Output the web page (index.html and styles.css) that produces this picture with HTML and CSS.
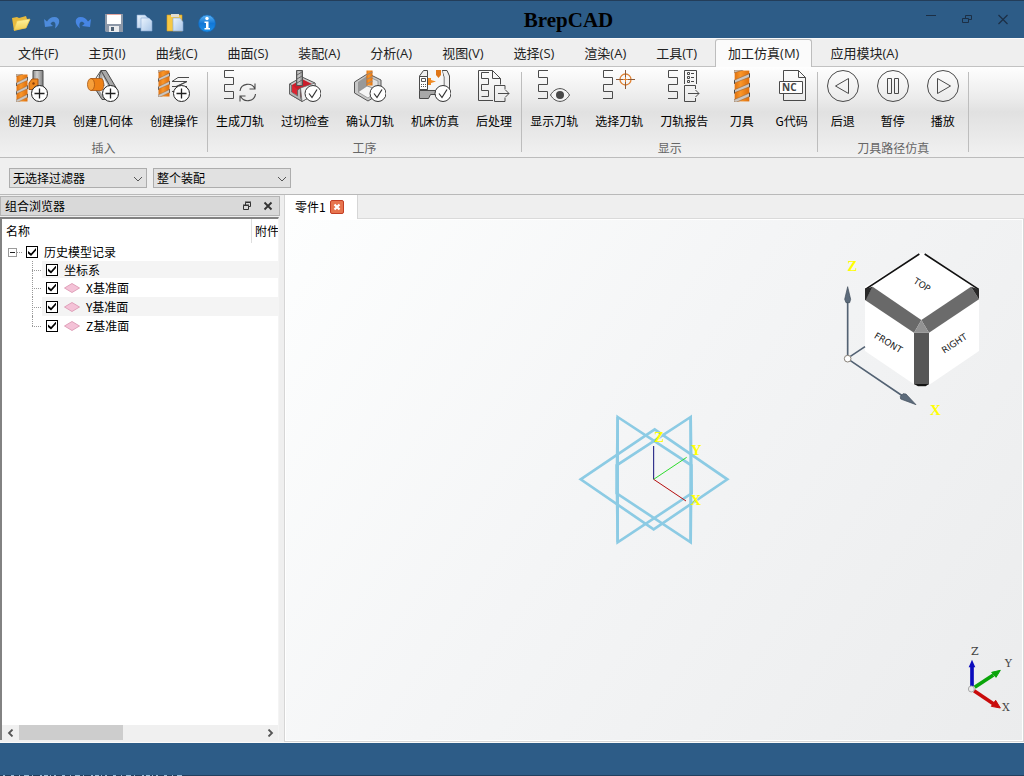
FILE: index.html
```html
<!DOCTYPE html>
<html lang="zh-CN">
<head>
<meta charset="utf-8">
<title>BrepCAD</title>
<link rel="stylesheet" href="styles.css">
</head>
<body>
<svg width="0" height="0" class="defs" aria-hidden="true">
  <defs>
    <linearGradient id="orange" x1="0" x2="1" y1="0" y2="0"><stop offset="0" stop-color="#e0720f"/><stop offset=".4" stop-color="#f9962a"/><stop offset="1" stop-color="#dd6e0c"/></linearGradient>
    <linearGradient id="steel" x1="0" x2="1" y1="0" y2="0"><stop offset="0" stop-color="#8b8b8b"/><stop offset=".4" stop-color="#cfcfcf"/><stop offset="1" stop-color="#7e7e7e"/></linearGradient>
    <linearGradient id="folder" x1="0" x2="0" y1="0" y2="1"><stop offset="0" stop-color="#fff3a0"/><stop offset="1" stop-color="#f2cf52"/></linearGradient>
    <linearGradient id="paper" x1="0" x2="1" y1="0" y2="1"><stop offset="0" stop-color="#eaf3fd"/><stop offset="1" stop-color="#a9c6e8"/></linearGradient>
    <linearGradient id="info" x1="0" x2="0" y1="0" y2="1"><stop offset="0" stop-color="#5db4f5"/><stop offset=".5" stop-color="#1277d6"/><stop offset="1" stop-color="#1b90ea"/></linearGradient>
    <symbol id="path" viewBox="0 0 32 32"><path d="M10 .5H.5V7.5H9.5V14.5H.5V21.5H9.5V28.5H0" fill="none" stroke="#4a4a4a"/></symbol>
    <symbol id="plus" viewBox="0 0 32 32"><circle cx="23.500" cy="23.500" r="8" fill="#fff" stroke="#222"/><path d="M23.500 18.500v10M18.500 23.500h10" stroke="#222" stroke-width="1.300"/></symbol>
    <symbol id="check" viewBox="0 0 32 32"><circle cx="24" cy="23.500" r="8" fill="#fff" stroke="#333"/><path d="M20 23.500l3 4 5-8" fill="none" stroke="#333" stroke-width="1.200"/></symbol>
    <symbol id="mill" viewBox="0 0 12 28" preserveAspectRatio="none"><path d="M.5.500h11v27H.5z" fill="url(#orange)"/><path d="M0 0h7L0 2.500zM0 9L12 3v3L0 11.500zM0 17.500L12 11.500v3L0 20zM0 26L12 20v3L2 28H0z" fill="#ccc6c0" stroke="#8a5a34" stroke-width=".4"/><path d="M.3 9v3M.3 17.500v3M11.700 3v3.500M11.700 11.500V15M11.700 20v3.500" stroke="#444" stroke-width=".9"/></symbol>
  </defs>
</svg>

<div class="app">
<header class="titlebar">
  <div class="quick">
    <button aria-label="打开"><svg viewBox="0 0 20 20"><path d="M1 5l5-1 2 1 7-2 1 3 3 1-4 8-12 3z" fill="#e6b93c"/><path d="M3 17L6 8l13-2-4 9z" fill="url(#folder)" stroke="#e8c552" stroke-width=".6"/></svg></button>
    <button aria-label="撤销"><svg viewBox="0 0 20 20"><path d="M2 6l1 8 8-1-2.500-2.200c2.500-3.800 6.500-2 4.500 4.700C19 11 18.500 4 12.500 4 9 4 6.500 6 5 8.500z" fill="#4d8bdc"/></svg></button>
    <button aria-label="重做"><svg viewBox="0 0 20 20"><path d="M18 6l-1 8-8-1 2.500-2.200C9 7 5 8.800 7 15.500 1 11 1.500 4 7.500 4 11 4 13.500 6 15 8.500z" fill="#4786e4"/></svg></button>
    <button aria-label="保存"><svg viewBox="0 0 20 20"><path d="M1 1h18v18H2l-1-1z" fill="#8d98a8"/><path d="M3 1h14v10H3z" fill="#fff"/><path d="M3 1.500h14" stroke="#e5a7a0"/><path d="M5 13h10v6H5z" fill="#e9ebee"/><path d="M7 14h3v4H7z" fill="#4f6275"/></svg></button>
    <button aria-label="复制"><svg viewBox="0 0 20 20"><path d="M2 2h8l3 3v10H2z" fill="url(#paper)" stroke="#86a9d3" stroke-width=".6"/><path d="M6 5h8l3 3v10H6z" fill="url(#paper)" stroke="#86a9d3" stroke-width=".6"/></svg></button>
    <button aria-label="粘贴"><svg viewBox="0 0 20 20"><path d="M1 2h15v16H1z" fill="#f6c845" stroke="#d69c21" stroke-width=".6"/><path d="M5 1h8v3H5z" fill="#e3ded0"/><path d="M7 5h7l3 4v9H7z" fill="url(#paper)" stroke="#86a9d3" stroke-width=".6"/></svg></button>
    <button aria-label="关于"><svg viewBox="0 0 20 20"><circle cx="10" cy="10.500" r="8.500" fill="url(#info)" stroke="#1667b4" stroke-width=".7"/><circle cx="10" cy="5.500" r="1.700" fill="#fff"/><path d="M7.500 8.500h4V15H13v1.500H7.500V15H9v-5H7.500z" fill="#fff"/></svg></button>
  </div>
  <h1>BrepCAD</h1>
  <div class="window-controls">
    <button aria-label="最小化"><svg viewBox="0 0 12 12"><path d="M1 1.500h10" stroke="#1c2f45"/></svg></button>
    <button aria-label="还原"><svg viewBox="0 0 12 12"><path d="M1.500 4.500h6v4h-6zM4.500 4V1.500h6v4H8" fill="none" stroke="#1c2f45"/></svg></button>
    <button aria-label="关闭"><svg viewBox="0 0 12 12"><path d="M1.500 1l9 9M10.500 1l-9 9" stroke="#1c2f45" stroke-width="1.200"/></svg></button>
  </div>
</header>

<nav class="tabs">
  <button>文件(F)</button><button>主页(I)</button><button>曲线(C)</button><button>曲面(S)</button><button>装配(A)</button><button>分析(A)</button><button>视图(V)</button><button>选择(S)</button><button>渲染(A)</button><button>工具(T)</button><button class="active">加工仿真(M)</button><button>应用模块(A)</button>
</nav>

<div class="ribbon">
  <section class="group">
    <div class="tools">
      <button><svg viewBox="0 0 32 32"><path d="M17 .5h10v20H17z" fill="url(#steel)" stroke="#4a4a4a"/><path d="M13 19.500V13l3-4h6v6l-4 4.500z" fill="#f08a20" stroke="#a65310"/><circle cx="17.500" cy="13.500" r="1.200" fill="#8a3f08"/><use href="#mill" x="0" y="4" width="12" height="28"/><use href="#plus"/></svg>创建刀具</button>
      <button><svg viewBox="0 0 32 32"><path d="M14 .5h5l10 17-8 12h-6L9 20l6-5-3-8z" fill="#a8a8a8" stroke="#4a4a4a"/><path d="M14 .5l11 19-5 9M14 .5L9 8" fill="none" stroke="#4a4a4a"/><path d="M15 5l8 14-4 7h-3l-5-8 7-2z" fill="#f4f4f4"/><path d="M4 8.500h10c3.500 0 3.500 12 0 12H4z" fill="#ee8116" stroke="#a65310" stroke-width=".8"/><ellipse cx="4" cy="14.500" rx="3.500" ry="6" fill="#f7a03b" stroke="#a65310" stroke-width=".8"/><use href="#plus"/></svg>创建几何体</button>
      <button><svg viewBox="0 0 32 32"><use href="#mill" x="0" y="0" width="12" height="27"/><path d="M31 7.500H20l-6 4h15l-10 5h-5M29 11.500l-11 5h11M14 21.500h5l10-5" fill="none" stroke="#4a4a4a"/><use href="#plus"/></svg>创建操作</button>
    </div>
    <h2>插入</h2>
  </section>
  <section class="group">
    <div class="tools">
      <button><svg viewBox="0 0 32 32"><use href="#path"/><path d="M16 21c1-8 12-9 15-2M31 13.500V19h-5.500M31.500 24c-1 8-12 9-15 2M16 31.500V26h5.500" fill="none" stroke="#4a4a4a" stroke-width="1.100"/></svg>生成刀轨</button>
      <button><svg viewBox="0 0 32 32"><path d="M.5 14L13 7l13 6v11l-13 7.500L.5 24z" fill="#c9c9c9" stroke="#555"/><path d="M3 15l10-6 10 5-9 5v9L3 22z" fill="#c91d2b"/><path d="M.5 14l2 1v7l6 4v-6l3-2v10l2 3.500L.5 24z" fill="#b8b8b8" stroke="#555" stroke-width=".7"/><path d="M11.500 18L26 13v11l-13 7.500z" fill="#ededed" stroke="#666" stroke-width=".8"/><path d="M3 15l5 4v6l-5-3z" fill="#da2633"/><path d="M7.500.5h6v15h-6z" fill="url(#steel)" stroke="#555"/><path d="M8 5l5-3M8 9l5-3M8 13l5-3" stroke="#666"/><use href="#check"/></svg>过切检查</button>
      <button><svg viewBox="0 0 32 32"><path d="M.5 12L14 3.500 27 10v13l-13 8L.5 23z" fill="#c8c8c8" stroke="#555"/><path d="M4 12l9-6v10l-9 6z" fill="#999"/><path d="M13 6l11 5v9l-11-4z" fill="#e2e2e2" stroke="#777" stroke-width=".6"/><path d="M4 22l9-6 11 4-10 8z" fill="#f5f5f5" stroke="#777" stroke-width=".6"/><path d="M12.500.5h6v15h-6z" fill="url(#orange)"/><path d="M12.500 5l6-3M12.500 9.500l6-3M12.500 14l6-3" stroke="#a9886a" stroke-width="1.300"/><use href="#check"/></svg>确认刀轨</button>
      <button><svg viewBox="0 0 32 32"><path d="M.5 20.500V6l4-5.500h4V19l-2 3h21l3-2V6L28 .5h-5l2 6.500v14" fill="#f0f0f0" stroke="#4a4a4a"/><path d="M9 0h14l1.500 7v12H9z" fill="#f6f6f6"/><path d="M.5 6.500h8v13h-8z" fill="#fff" stroke="#4a4a4a"/><path d="M2.500 8.500h4v3h-4z" fill="none" stroke="#555"/><path d="M2 14.500h5M2 16.500h5" stroke="#555" stroke-dasharray="1 1"/><path d="M.5 20.500h19v4h-8l-2 4h-9z" fill="#a8a8a8" stroke="#4a4a4a"/><path d="M17 0h5v5l-2.500 3L17 5z" fill="#df7516"/><path d="M9 8h3v2l5 1.500-5 1.500v2H9z" fill="#ef8921"/><use href="#check"/></svg>机床仿真</button>
      <button><svg viewBox="0 0 32 32"><path d="M15 30.500H.5V.5h14l8 8v6M14.500.5v8h8" fill="none" stroke="#4a4a4a"/><path d="M11 2.500H3.500v6h7v6h-7v6h7v6h-7" fill="none" stroke="#4a4a4a"/><path d="M27 19.500v-4H16.500v16H27v-4M20 23.500h11M27.500 20l3.500 3.500-3.500 3.500" fill="none" stroke="#4a4a4a"/></svg>后处理</button>
    </div>
    <h2>工序</h2>
  </section>
  <section class="group">
    <div class="tools">
      <button><svg viewBox="0 0 32 32"><use href="#path"/><path d="M12.500 25c5-8.500 14-8.500 19 0-5 8.500-14 8.500-19 0z" fill="#f6f6f6" stroke="#4a4a4a"/><circle cx="22" cy="25" r="4" fill="#4a4a4a"/></svg>显示刀轨</button>
      <button><svg viewBox="0 0 32 32"><use href="#path"/><circle cx="22.500" cy="9.500" r="5.500" fill="none" stroke="#e08232" stroke-width="1.300"/><path d="M22.500 0v8M22.500 11v8M13 9.500h8M24 9.500h8" stroke="#8b5a38"/><path d="M20 9.500h5M22.500 7v5" stroke="#e08232"/></svg>选择刀轨</button>
      <button><svg viewBox="0 0 32 32"><use href="#path"/><path d="M16.500 14V.5h12V14" fill="none" stroke="#4a4a4a"/><path d="M19.500 2.500h2v2h-2zM19.500 6.500h2v2h-2zM19.500 10.500h2v2h-2zM23 3.500h3M23 7.500h3M23 11.500h3" fill="none" stroke="#4a4a4a"/><path d="M27.500 19v-3.500h-11v16h11V28M20 23.500h11M27.500 20l3.500 3.500-3.500 3.500" fill="none" stroke="#4a4a4a"/></svg>刀轨报告</button>
      <button><svg viewBox="0 0 32 32"><use href="#mill" x="8" y="0" width="16" height="32"/></svg>刀具</button>
      <button><svg viewBox="0 0 32 32"><path d="M7.500 11V.5h15l7 7v23h-22V24M22.500.5v7h7" fill="none" stroke="#4a4a4a"/><path d="M3.500 11.500h23v12h-23z" fill="#fff" stroke="#4a4a4a"/><text x="6" y="21" class="nc">NC</text></svg>G代码</button>
    </div>
    <h2>显示</h2>
  </section>
  <section class="group">
    <div class="tools">
      <button><svg viewBox="0 0 32 32"><circle cx="16" cy="16" r="15.500" fill="none" stroke="#4a4a4a"/><path d="M8.500 16l13-7.500v15z" fill="none" stroke="#4a4a4a"/></svg>后退</button>
      <button><svg viewBox="0 0 32 32"><circle cx="16" cy="16" r="15.500" fill="none" stroke="#4a4a4a"/><path d="M10.500 8.500h4v15h-4zM17.500 8.500h4v15h-4z" fill="none" stroke="#4a4a4a"/></svg>暂停</button>
      <button><svg viewBox="0 0 32 32"><circle cx="16" cy="16" r="15.500" fill="none" stroke="#4a4a4a"/><path d="M23.500 16l-13-7.500v15z" fill="none" stroke="#4a4a4a"/></svg>播放</button>
    </div>
    <h2>刀具路径仿真</h2>
  </section>
</div>

<div class="filters">
  <div class="combo"><select aria-label="选择过滤器"><option>无选择过滤器</option></select><svg viewBox="0 0 10 6"><path d="M1 1l4 4 4-4" fill="none" stroke="#555"/></svg></div>
  <div class="combo"><select aria-label="选择范围"><option>整个装配</option></select><svg viewBox="0 0 10 6"><path d="M1 1l4 4 4-4" fill="none" stroke="#555"/></svg></div>
</div>

<main class="workspace">
  <aside class="dock">
    <header class="dock-title">
      <h2>组合浏览器</h2>
      <button aria-label="浮动"><svg viewBox="0 0 10 10"><path d="M1.500 4.500h5v4h-5zM3.500 4V1.500h5v4H7M1 4h6M3 1h6" fill="none" stroke="#333"/></svg></button>
      <button aria-label="关闭面板"><svg viewBox="0 0 10 10"><path d="M1.500 1.500l7 7M8.500 1.500l-7 7" stroke="#333" stroke-width="1.800"/></svg></button>
    </header>
    <div class="tree-frame">
      <div class="tree-head"><span>名称</span><span>附件</span></div>
      <ul class="tree">
        <li>
          <div class="root"><button class="expander" aria-label="折叠"></button><input type="checkbox" id="n0" checked><label for="n0">历史模型记录</label></div>
          <ul class="children">
            <li class="short"><div><input type="checkbox" id="n1" checked><label for="n1">坐标系</label></div></li>
            <li><div><input type="checkbox" id="n2" checked><label for="n2"><svg viewBox="0 0 16 10"><path d="M.5 5L8 .5 15.500 5 8 9.500z" fill="#f4c2d7" stroke="#dfa0b9"/></svg>X基准面</label></div></li>
            <li><div><input type="checkbox" id="n3" checked><label for="n3"><svg viewBox="0 0 16 10"><path d="M.5 5L8 .5 15.500 5 8 9.500z" fill="#f4c2d7" stroke="#dfa0b9"/></svg>Y基准面</label></div></li>
            <li><div><input type="checkbox" id="n4" checked><label for="n4"><svg viewBox="0 0 16 10"><path d="M.5 5L8 .5 15.500 5 8 9.500z" fill="#f4c2d7" stroke="#dfa0b9"/></svg>Z基准面</label></div></li>
          </ul>
        </li>
      </ul>
      <div class="scrollbar">
        <button aria-label="向左滚动"><svg viewBox="0 0 8 8"><path d="M5.500 .5L2 4l3.500 3.500" fill="none" stroke="#555" stroke-width="1.800"/></svg></button>
        <div class="track"><div class="thumb"></div></div>
        <button aria-label="向右滚动"><svg viewBox="0 0 8 8"><path d="M2.500 .5L6 4 2.500 7.500" fill="none" stroke="#555" stroke-width="1.800"/></svg></button>
      </div>
    </div>
  </aside>

  <section class="document">
    <div class="doc-tabs">
      <div class="doc-tab"><span>零件1</span><button aria-label="关闭零件1"><svg viewBox="0 0 14 14"><rect x=".5" y=".5" width="13" height="13" rx="1.500" fill="#e7744e" stroke="#c33f25"/><path d="M4.500 4.500l5 5M9.500 4.500l-5 5" stroke="#fff" stroke-width="2.200"/></svg></button></div>
    </div>
    <div class="viewport">
      <svg class="model" viewBox="0 0 510 450">
        <g fill="none" stroke="#8ccbe4" stroke-width="8">
          <path d="M32 223L254 73 472 223 251 373z"/>
          <path d="M143 36L364 181 362 412 140 265z"/>
          <path d="M362 36L140 181 143 412 365 265z"/>
          <path d="M143 36V412M362 36V412"/>
        </g>
        <path d="M251 123V223" stroke="#10107a" stroke-width="3"/>
        <path d="M251 223L350 157" stroke="#2ddc2d" stroke-width="3"/>
        <path d="M251 223L348 288" stroke="#b50d0d" stroke-width="3"/>
        <g class="axis-label"><text x="252" y="110">Z</text><text x="362" y="149">Y</text><text x="361" y="299">X</text></g>
      </svg>

      <svg class="cube" viewBox="0 0 510 570">
        <path d="M105 140L270 40H282L447 148V333L297 435 285 440H266L252 433 105 333z" fill="#fff"/>
        <path d="M106 148L268 42M284 42L446 148" stroke="#111" stroke-width="5"/>
        <path d="M105 180L128 140 274 240 252 278z" fill="#696969"/>
        <path d="M447 178L423 140 274 240 297 278z" fill="#6b6b6b"/>
        <path d="M105 146L128 140 107 180 105 180zM447 148L423 140 447 178z" fill="#292929"/>
        <path d="M252 278H297V433H252z" fill="#575757"/>
        <path d="M274 240L297 278H252z" fill="#929292"/>
        <path d="M252 432H297L287 439H264z" fill="#151515"/>
        <g class="face"><text transform="translate(271 142) rotate(33)">TOP</text><text transform="translate(170 316) rotate(31)">FRONT</text><text transform="translate(378 318) rotate(-33)">RIGHT</text></g>
        <path d="M53 348V180M60 350L105 320M60 361L218 468" stroke="#536273" stroke-width="5"/>
        <path d="M53 140L62 178 59 188H48L44 178zM258 494L212 477 211 469 219 461 228 462z" fill="#5c6b7b" stroke="#3f4b59" stroke-width="2"/>
        <circle cx="53" cy="356" r="10" fill="#fff" stroke="#878178" stroke-width="3"/>
        <g class="axis-label"><text x="52" y="94">Z</text><text x="300" y="524">X</text></g>
      </svg>

      <svg class="triad" viewBox="0 0 252 300">
        <path d="M96 140V78" stroke="#0b0bbd" stroke-width="11"/><path d="M96 59L106 82H86z" fill="#0b0bbd"/>
        <path d="M104 142L160 105" stroke="#0aa50a" stroke-width="11"/><path d="M181 91L168 112 155 97z" fill="#0aa50a" stroke="#0aa50a" stroke-width="3"/>
        <path d="M102 152L160 191" stroke="#c90b0b" stroke-width="11"/><path d="M181 204L154 199 167 181z" fill="#c90b0b" stroke="#c90b0b" stroke-width="3"/>
        <circle cx="94" cy="147" r="9" fill="#e8e8e8" stroke="#aaa" stroke-width="3"/>
        <g class="triad-label"><text x="93" y="44">Z</text><text x="194" y="80">Y</text><text x="186" y="212">X</text></g>
      </svg>
    </div>
  </section>
</main>
<footer class="status"><svg viewBox="0 0 184 1" width="184" height="1"><path d="M3 .5h180" stroke="#9dbdd6" stroke-dasharray="2 6 3 5 1 4 5 3 1 7 2 2 4 2 1 3"/></svg></footer>
</div>
</body>
</html>
```
FILE: styles.css
```css
* { box-sizing: border-box; }
html, body { height: 100%; }
body {
  margin: 0;
  font: 12px/16px "Noto Sans CJK SC", sans-serif;
  color: #000;
  background: #efefef;
}
button { border: 0; padding: 0; background: none; font: inherit; color: inherit; }
h1, h2 { margin: 0; font: inherit; }
ul { list-style: none; margin: 0; padding: 0; }
svg { display: block; flex: none; }
.defs { position: absolute; }
.app { min-height: 100%; display: flex; flex-direction: column; }

.titlebar {
  height: 38px;
  display: flex;
  align-items: center;
  background: #2d5c87;
  border-top: 1px solid #233d59;
}
.quick { display: flex; gap: 11px; padding: 7px 0 0 11px; width: 224px; }
.quick svg { width: 20px; height: 20px; }
.titlebar h1 {
  flex: 1;
  text-align: center;
  font: bold 21px/24px "Liberation Serif", serif;
}
.window-controls { display: flex; padding-right: 3px; }
.window-controls button { width: 36px; display: grid; justify-content: center; }
.window-controls svg { width: 12px; height: 12px; }

.tabs {
  display: flex;
  height: 29px;
  padding-left: 6px;
  gap: 6px;
  border-top: 1px solid #fafafa;
  box-shadow: inset 0 -1px #c2c2c2;
  font: 13px/18px "Open Sans", "Noto Sans CJK SC", sans-serif;
  color: #222;
}
.tabs button { padding: 0 11px 2px; border: 1px solid transparent; border-bottom: 0; }
.tabs .active {
  padding: 0 12px 2px;
  background: #fbfbfb;
  border-color: #bdbdbd;
  border-radius: 3px 3px 0 0;
}

.ribbon {
  display: flex;
  height: 91px;
  background: linear-gradient(#fefefe 0, #ececec 34%, #e1e1e1 50%, #f1f1f1 100%);
  border-bottom: 1px solid #bcbcbc;
}
.group { position: relative; padding-right: 1px; display: flex; flex-direction: column; }
.group::after {
  content: "";
  position: absolute;
  right: 0; top: 5px; bottom: 5px;
  width: 1px;
  background: #bdbdbd;
}
.tools { display: flex; }
.tools button {
  min-width: 50px;
  padding: 3px 9px 0 8px;
  display: flex;
  flex-direction: column;
  align-items: center;
  gap: 11px;
  white-space: nowrap;
}
.tools svg { width: 32px; height: 32px; }
.group h2 { text-align: center; color: #666; padding-top: 11px; }
.nc { font: bold 10px "Open Sans", sans-serif; fill: #444; }

.filters {
  display: flex;
  gap: 6px;
  height: 37px;
  padding: 10px 9px 0;
  border-bottom: 1px solid #b9b9b9;
}
.combo { position: relative; width: 138px; height: 20px; }
.combo select {
  appearance: none;
  width: 100%;
  height: 100%;
  padding: 0 3px;
  border: 1px solid #adadad;
  border-radius: 0;
  background: #e1e1e1;
  font: inherit;
  color: #000;
}
.combo svg { position: absolute; right: 4px; top: 8px; width: 10px; height: 6px; pointer-events: none; }

.workspace { flex: 1; display: flex; min-height: 0; }
.dock { width: 280px; display: flex; flex-direction: column; padding-top: 1px; }
.dock-title {
  display: flex;
  align-items: center;
  gap: 11px;
  height: 20px;
  padding: 0 6px 0 4px;
  background: #d9d9d9;
  border: 1px solid #b4b4b4;
}
.dock-title h2 { flex: 1; }
.dock-title svg { width: 10px; height: 10px; }
.tree-frame {
  flex: 1;
  display: flex;
  flex-direction: column;
  margin: 1px 1px 2px 0;
  border-left: 2px solid #828282;
  border-top: 2px solid #828282;
  border-right: 1px solid #f4f4f4;
  background: #fff;
}
.tree-head { display: flex; height: 24px; line-height: 24px; overflow: hidden; white-space: nowrap; }
.tree-head span:first-child { flex: 1; padding-left: 4px; border-right: 1px solid #dedede; }
.tree-head span:last-child { width: 26px; padding-left: 3px; overflow: hidden; }
.tree { flex: 1; }
.root { display: flex; align-items: center; height: 18px; padding-left: 6px; position: relative; }
.expander { width: 9px; height: 9px; border: 1px solid #9a9a9a; margin-right: 9px; display: grid; place-items: center; }
.expander::before { content: ""; width: 5px; height: 1px; background: #222; }
.root::before { content: ""; position: absolute; left: 15px; width: 5px; border-top: 1px dotted #999; }
.tree input {
  appearance: none;
  width: 12px;
  height: 12px;
  margin: 0;
  border: 1px solid #000;
  background: #fff;
  display: grid;
  place-items: center;
  flex: none;
}
.tree input:checked::before {
  content: "";
  width: 8px;
  height: 8px;
  background: #000;
  clip-path: polygon(0 38%, 38% 70%, 100% 0, 100% 30%, 38% 100%, 0 68%);
}
.tree label { display: flex; align-items: center; gap: 6px; padding-left: 6px; }
.tree label svg { width: 16px; height: 10px; }
.children { padding-left: 30px; }
.children li { height: 19px; position: relative; padding-left: 10px; }
.children .short { height: 17px; }
.children li > div { height: 100%; display: flex; align-items: center; padding-left: 4px; }
.children li:nth-child(odd) > div { background: #f4f4f4; }
.children li::before { content: ""; position: absolute; left: 0; top: 0; height: 100%; border-left: 1px dotted #999; }
.children li:last-child::before { height: 50%; }
.children li::after { content: ""; position: absolute; left: 0; top: 50%; width: 9px; border-top: 1px dotted #999; }

.scrollbar { display: flex; height: 15px; background: #f0f0f0; }
.scrollbar button { width: 17px; display: grid; place-items: center; }
.scrollbar svg { width: 8px; height: 8px; }
.track { flex: 1; }
.thumb { width: 43%; height: 100%; background: #cdcdcd; }

.document { flex: 1; margin-left: 4px; display: flex; flex-direction: column; min-width: 0; }
.doc-tabs { height: 24px; display: flex; border-left: 1px solid #d6d6d6; box-shadow: inset 0 -1px #dadada; }
.doc-tab {
  display: flex;
  align-items: center;
  gap: 4px;
  padding: 0 13px 0 10px;
  background: #fff;
  border-right: 1px solid #d6d6d6;
}
.doc-tab svg { width: 14px; height: 14px; }
.viewport {
  flex: 1;
  position: relative;
  display: grid;
  place-items: center;
  min-height: 520px;
  padding-left: 2px;
  border: 1px solid #d6d6d6;
  border-top: 0;
  background: linear-gradient(125deg, #fdfefe 0%, #f4f5f6 45%, #ebeced 100%);
  box-shadow: inset 0 0 0 1px #fff;
}
.model { width: 170px; height: 150px; }
.cube { position: absolute; top: 21px; right: 23px; width: 170px; height: 190px; }
.triad { position: absolute; bottom: 1px; right: -1px; width: 84px; height: 100px; }
.axis-label { font: bold 45px "Liberation Serif", serif; fill: #ff0; }
.face { font: 27px "DejaVu Sans", sans-serif; fill: #222; text-anchor: middle; }
.triad-label { font: 33px "DejaVu Serif", serif; fill: #444; }

.status {
  height: 34px;
  display: flex;
  align-items: flex-end;
  background: linear-gradient(#2d5c87 32px, #22405f 32px);
  border-top: 1px solid #fafafa;
}
```
